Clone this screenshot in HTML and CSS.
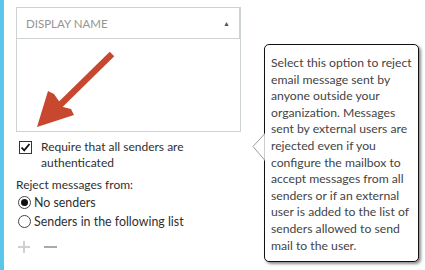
FILE: index.html
```html
<!DOCTYPE html>
<html lang="en">
<head>
  <meta charset="UTF-8" />
  <title>Message Delivery Restrictions</title>
  <link rel="stylesheet" href="styles.css">
</head>
<body>

  <div class="page">
    <div class="panel">

      <!-- Senders grid -->
      <div class="grid">
        <div class="grid-head">
          <span>DISPLAY NAME</span>
          <span class="sort">&#9650;</span>
        </div>
        <div class="grid-body"></div>
      </div>

      <label class="check-row">
        <span class="checkbox">
          <svg width="11" height="11" viewBox="0 0 11 11"><path d="M1.5 5.5 L4.2 8.3 L9.5 2" fill="none" stroke="#111" stroke-width="1.8"/></svg>
        </span>
        <span>Require that all senders are<br>authenticated</span>
      </label>

      <div class="field-label">Reject messages from:</div>
      <div class="radio-row"><span class="radio on"></span>No senders</div>
      <div class="radio-row"><span class="radio"></span>Senders in the following list</div>

      <div class="tools">
        <svg class="add" width="12" height="12" viewBox="0 0 12 12"><path d="M6 0 V12 M0 6 H12" stroke="#cfcfcf" stroke-width="2"/></svg>
        <svg class="remove" width="13" height="12" viewBox="0 0 13 12"><path d="M0 6 H13" stroke="#a9a9a9" stroke-width="2"/></svg>
      </div>

      <!-- Annotation arrow -->
      <svg class="arrow" width="90" height="85" viewBox="0 0 90 85">
        <path d="M76 7 L24 58" stroke="#c8472f" stroke-width="6.5"/>
        <polygon points="1,80 12,44 18,47 27,60 35,62 38,68" fill="#c8472f"/>
      </svg>
    </div>

    <!-- Help callout -->
    <div class="callout">
      <svg class="callout-tip" width="14" height="28" viewBox="0 0 14 28">
        <polygon points="13,0.5 1,13.5 13,27.5" fill="#fff" stroke="#9a9a9a" stroke-width="1"/>
        <rect x="13" y="0" width="1" height="28" fill="#fff"/>
      </svg>
      Select this option to reject<br>
      email message sent by<br>
      anyone outside your<br>
      organization. Messages<br>
      sent by external users are<br>
      rejected even if you<br>
      configure the mailbox to<br>
      accept messages from all<br>
      senders or if an external<br>
      user is added to the list of<br>
      senders allowed to send<br>
      mail to the user.
    </div>
  </div>

</body>
</html>
```

FILE: styles.css
```css
/* General layout */
body {
  margin: 0;
  padding: 0;
  background-color: #fff;
  font-family: "Segoe UI", Lato, sans-serif;
  font-size: 12px;
  color: #2f2f2f;
}

.page {
  position: relative;
  width: 425px;
  height: 270px;
  border-left: 4px solid #5cc5ea;
  box-sizing: border-box;
}

.panel {
  position: relative;
  padding: 7px 0 0 12px;
  width: 225px;
}

/* Grid */
.grid {
  border: 1px solid #cdd3d3;
}

.grid-head {
  height: 30px;
  display: flex;
  align-items: center;
  justify-content: space-between;
  padding: 0 9px 0 9px;
  border-bottom: 1px solid #cdd3d3;
  border-right: 1px solid #cdd3d3;
  color: #959595;
  font-size: 11.5px;
}

.sort {
  font-size: 7px;
  color: #555;
}

.grid-body {
  height: 92px;
}

/* Checkbox */
.check-row {
  display: flex;
  align-items: flex-start;
  gap: 9px;
  margin-top: 7px;
  padding-left: 3px;
  line-height: 16px;
}

.checkbox {
  flex: none;
  width: 11px;
  height: 11px;
  margin-top: 2px;
  border: 1px solid #333;
  display: flex;
}

.field-label {
  margin-top: 6px;
  line-height: 16px;
}

/* Radios */
.radio-row {
  display: flex;
  align-items: center;
  gap: 3px;
  height: 19px;
  padding-left: 2px;
  font-size: 12.4px;
}

.radio-row:first-of-type {
  margin-top: 1px;
}

.radio {
  width: 11px;
  height: 11px;
  border: 1px solid #444;
  border-radius: 50%;
  position: relative;
}

.radio.on::after {
  content: "";
  position: absolute;
  left: 2px;
  top: 2px;
  width: 7px;
  height: 7px;
  border-radius: 50%;
  background-color: #111;
}

.tools {
  display: flex;
  align-items: center;
  gap: 14px;
  margin-top: 10px;
  padding-left: 2px;
}

/* Red annotation arrow */
.arrow {
  position: absolute;
  left: 32px;
  top: 47px;
}

/* Callout */
.callout {
  position: absolute;
  left: 260px;
  top: 44px;
  width: 141px;
  padding: 10px 6px 7px 6px;
  border: 1px solid #111;
  border-radius: 5px;
  background-color: #fff;
  box-shadow: 2px 2px 3px rgba(0, 0, 0, 0.45);
  color: #444;
  font-size: 12.2px;
  line-height: 16.6px;
  white-space: nowrap;
}

.callout-tip {
  position: absolute;
  left: -13px;
  top: 88px;
}
```
